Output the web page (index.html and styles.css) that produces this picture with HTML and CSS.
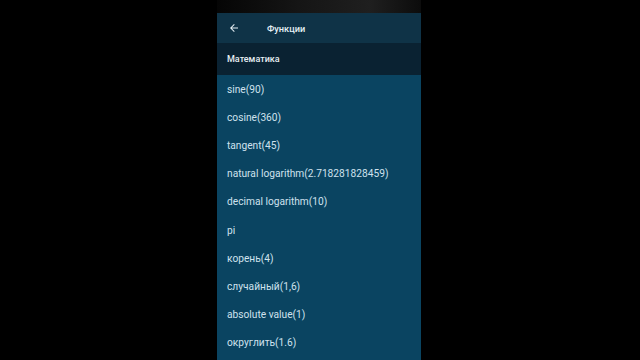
FILE: index.html
```html
<!DOCTYPE html>
<html lang="ru">
<head>
    <meta charset="UTF-8">
    <meta name="viewport" content="width=device-width, initial-scale=1.0">
    <title>Функции</title>
    <link rel="stylesheet" href="styles.css">
</head>
<body>
    <div id="phone">
        <div id="statusBar"></div>

        <!-- Toolbar -->
        <div id="toolbar">
            <svg class="back" width="12" height="12" viewBox="0 0 24 24">
                <path d="M20 11H7.8l5.6-5.6L12 4l-8 8 8 8 1.4-1.4L7.8 13H20z" fill="#e6f0f5"/>
            </svg>
            <span class="title">Функции</span>
        </div>

        <div id="sectionHeader">Математика</div>

        <!-- Function list -->
        <div id="functionList">
            <div class="item">sine(90)</div>
            <div class="item">cosine(360)</div>
            <div class="item">tangent(45)</div>
            <div class="item">natural logarithm(2.718281828459)</div>
            <div class="item">decimal logarithm(10)</div>
            <div class="item">pi</div>
            <div class="item">корень(4)</div>
            <div class="item">случайный(1,6)</div>
            <div class="item">absolute value(1)</div>
            <div class="item">округлить(1.6)</div>
        </div>
    </div>
</body>
</html>
```

FILE: styles.css
```css
html, body {
    margin: 0;
    height: 100%;
    background: #000;
    overflow: hidden;
}

body {
    font-family: Roboto, "Noto Sans", Arial, sans-serif;
    color: #d4e5ef;
}

#phone {
    width: 204px;
    margin-left: 217px;
    display: flex;
    flex-direction: column;
}

#statusBar {
    height: 13px;
    background: linear-gradient(90deg, #050505 0%, #151515 40%, #1f1f1f 75%, #0c0c0c 100%);
}

#toolbar {
    height: 30px;
    background: #0f3347;
    display: flex;
    align-items: center;
    padding-left: 11px;
    box-sizing: border-box;
}

#toolbar .back {
    flex: none;
}

#toolbar .title {
    margin-left: 27px;
    font-size: 9.2px;
    font-weight: 500;
    color: #e6f0f5;
}

#sectionHeader {
    height: 32px;
    background: #0a2232;
    display: flex;
    align-items: center;
    padding-left: 10px;
    font-size: 9px;
    font-weight: 500;
    color: #e6eef2;
}

#functionList {
    background: #0a4461;
    height: 300px;
}

.item {
    height: 28.2px;
    display: flex;
    align-items: center;
    padding-left: 10px;
    font-size: 10.2px;
    color: #cfe2ee;
    white-space: nowrap;
}
```
